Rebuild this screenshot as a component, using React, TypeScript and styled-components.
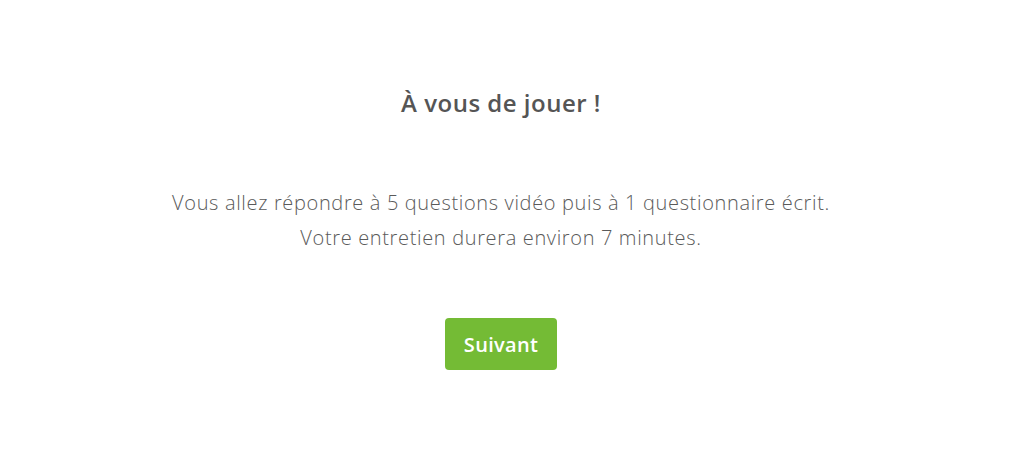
import React from "react";
import styled, { createGlobalStyle } from "styled-components";

const Global = createGlobalStyle`
  html, body { margin: 0; padding: 0; background: #ffffff; }
  body { font-family: "Open Sans", "Noto Sans", sans-serif; }
`;

const Page = styled.main`
  width: 1002px;
  height: 459px;
  display: flex;
  flex-direction: column;
  align-items: center;
  box-sizing: border-box;
  padding-top: 85px;
`;

const Title = styled.h1`
  margin: 0;
  font-size: 24px;
  font-weight: 600;
  letter-spacing: 0.5px;
  color: #555555;
  line-height: 36px;
`;

const Text = styled.p`
  margin: 64px 0 0;
  font-size: 20px;
  font-weight: 350;
  letter-spacing: 0.65px;
  color: #5a5a5a;
  line-height: 35px;
  text-align: center;
`;

const Button = styled.button`
  margin-top: 63px;
  width: 112px;
  height: 52px;
  border: none;
  border-radius: 4px;
  background: #74bb35;
  color: #ffffff;
  font-family: "Open Sans", "Noto Sans", sans-serif;
  font-size: 20px;
  font-weight: 600;
  letter-spacing: 0.3px;
  cursor: pointer;
`;

export default function App() {
  return (
    <>
      <Global />
      <Page>
        <Title>À vous de jouer !</Title>
        <Text>
          Vous allez répondre à 5 questions vidéo puis à 1 questionnaire écrit.
          <br />
          Votre entretien durera environ 7 minutes.
        </Text>
        <Button>Suivant</Button>
      </Page>
    </>
  );
}
